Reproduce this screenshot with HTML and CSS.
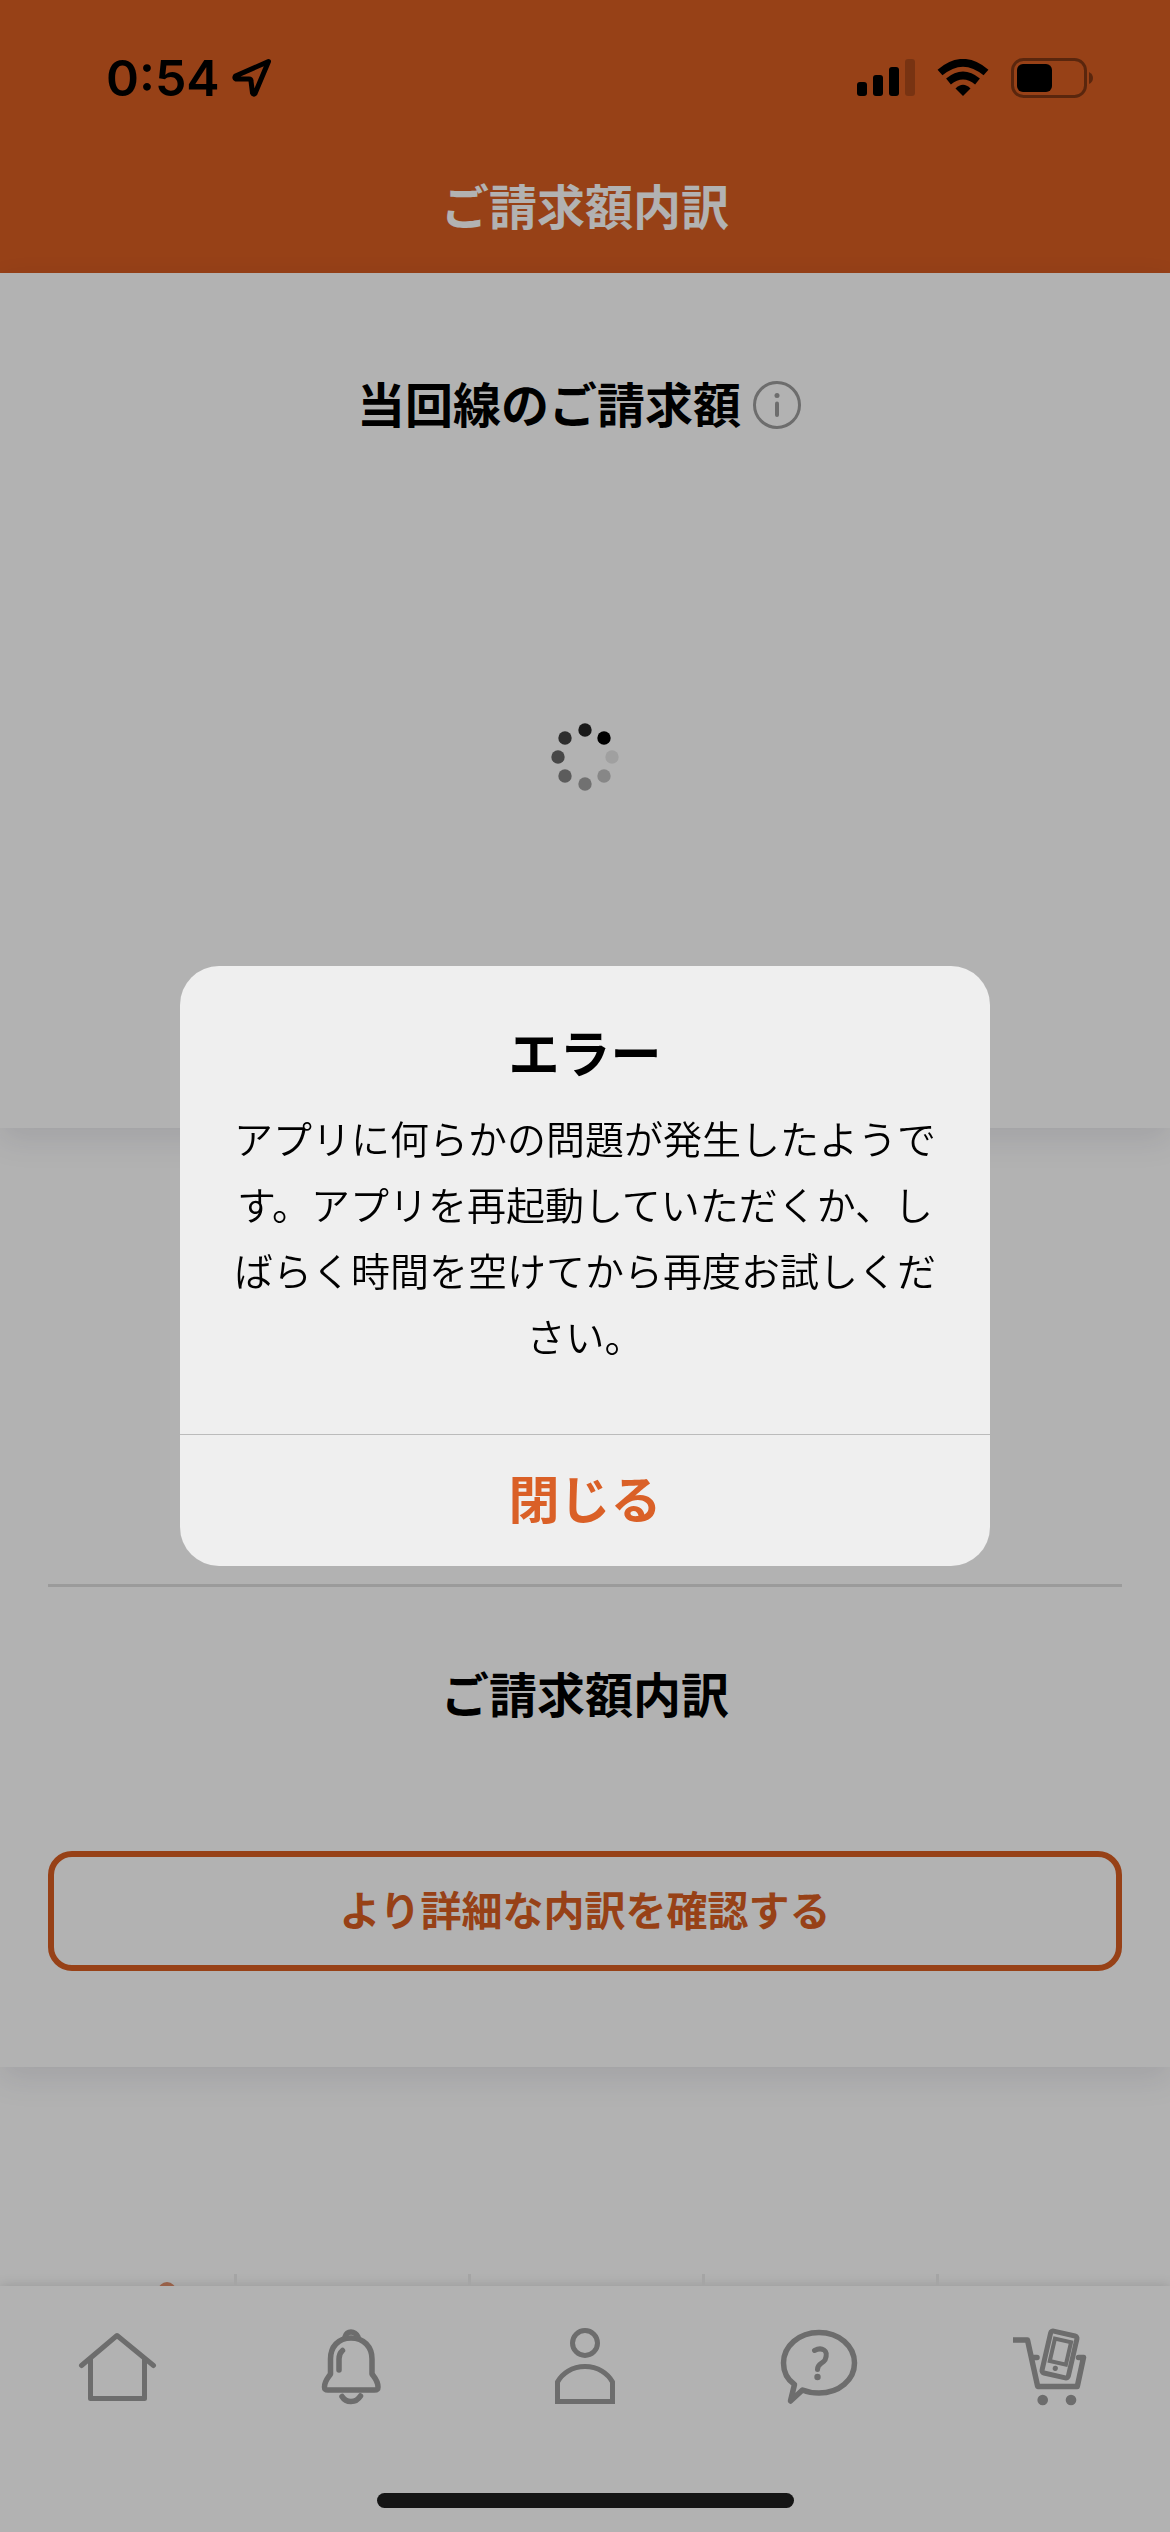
FILE: index.html
```html
<!DOCTYPE html>
<html lang="ja">
<head>
<meta charset="utf-8">
<meta name="viewport" content="width=device-width, initial-scale=1">
<title>ご請求額内訳</title>
<link rel="stylesheet" href="styles.css">
</head>
<body>
<div class="app">
  <header class="header">
    <div class="status">
      <div class="status-left">
        <span class="time">0:54</span>
        <svg width="40" height="40" viewBox="0 0 40 40" fill="none" stroke="#000" stroke-width="5" stroke-linejoin="round" aria-hidden="true"><path d="M36.500 3.500L3.500 18Q2 20 4 21H17Q19 21 19 23L20.500 35Q21.500 37 23 35.500Z"/></svg>
      </div>
      <div class="status-right">
        <svg width="58" height="38" viewBox="0 0 58 38" aria-hidden="true"><rect y="23" width="10" height="14" rx="3"/><rect x="16" y="16" width="10" height="21" rx="3"/><rect x="32" y="8" width="10" height="29" rx="3"/><rect x="48" width="10" height="37" rx="3" opacity=".2"/></svg>
        <svg width="52" height="38" viewBox="0 0 52 38" aria-hidden="true"><path d="M26 37L18.500 29.500Q26 22 33.500 29.500Z"/><g fill="none" stroke="#000" stroke-width="7.500"><path d="M11.500 22.500Q26 10.500 40.500 22.500"/><path d="M3 13.500Q26 -6 49 13.500"/></g></svg>
        <svg width="84" height="40" viewBox="0 0 84 40" aria-hidden="true"><rect x="1.500" y="1.500" width="73" height="37" rx="11" fill="none" stroke="#000" stroke-width="3" opacity=".4"/><rect x="6" y="6" width="35" height="28" rx="6"/><path d="M78 14Q82 16 82 20T78 26Z" opacity=".4"/></svg>
      </div>
    </div>
    <h1 class="page-title">ご請求額内訳</h1>
  </header>

  <main class="main">
    <section class="card card-amount">
      <div class="amount-head">
        <h2 class="heading">当回線のご請求額</h2>
        <button class="info" type="button" aria-label="説明">
          <svg width="48" height="48" viewBox="0 0 48 48" fill="none" stroke="#9c9c9c" stroke-linecap="round"><circle cx="24" cy="24" r="22.500" stroke-width="3"/><path d="M24 22.500V34" stroke-width="4"/><circle cx="24" cy="14.500" r="2.500" fill="#9c9c9c" stroke="none"/></svg>
        </button>
      </div>
      <svg class="spinner" width="68" height="68" viewBox="0 0 68 68" role="img" aria-label="読み込み中">
        <circle cx="53" cy="15" r="6.700"/>
        <circle cx="34" cy="7" r="6.700" opacity=".85"/>
        <circle cx="14" cy="15" r="6.700" opacity=".74"/>
        <circle cx="7" cy="34" r="6.700" opacity=".6"/>
        <circle cx="14" cy="53" r="6.700" opacity=".48"/>
        <circle cx="34" cy="61" r="6.700" opacity=".36"/>
        <circle cx="53" cy="53" r="6.700" opacity=".24"/>
        <circle cx="61" cy="34" r="6.700" opacity=".1"/>
      </svg>
    </section>

    <section class="card card-detail">
      <hr class="rule">
      <h2 class="heading">ご請求額内訳</h2>
      <button class="detail-button" type="button">より詳細な内訳を確認する</button>
    </section>

    <div class="tiles" aria-hidden="true">
      <div class="tile"><span class="tile-badge"></span></div>
      <div class="tile"></div>
      <div class="tile"></div>
      <div class="tile"></div>
      <div class="tile"></div>
    </div>
  </main>

  <nav class="tabs">
    <a class="tab" href="#home" aria-label="ホーム">
      <svg class="tab-icon" viewBox="0 0 80 80" stroke-width="5"><path d="M4.500 38.500L40 8.500L76.500 38.500M13.500 31.500V71.500H67.500V31.500"/></svg>
    </a>
    <a class="tab" href="#news" aria-label="お知らせ">
      <svg class="tab-icon" viewBox="0 0 80 80" stroke-width="5.500"><path d="M40 11C27 11 19.500 20 19.500 32V47C17 51 13.500 54 13.500 60Q13.500 63 17 63H63.500Q67 63 67 60C67 54 64 51 61 47V32C61 20 53 11 40 11Z"/><path d="M34 10Q35.500 5 40 5T47 10"/><path d="M31.500 23.500Q28 26.500 28 32V43"/><path d="M31 69.500Q34 74.500 40 74.500T49.500 69"/></svg>
    </a>
    <a class="tab" href="#account" aria-label="マイページ">
      <svg class="tab-icon tab-icon-sharp" viewBox="0 0 80 80" stroke-width="5"><circle cx="40" cy="16" r="12.500"/><path d="M12.500 74.500V55C17 46.500 27 39.500 40 39.500S63 46.500 67.500 55V74.500Z"/></svg>
    </a>
    <a class="tab" href="#support" aria-label="サポート">
      <svg class="tab-icon" viewBox="0 0 80 80" stroke-width="5.500"><path d="M15.500 57.500C9 53 4.500 45 4.500 36C4.500 19 20 5.500 40 5.500S75.500 19 75.500 36S60 66 40 66Q31 66 23.500 63L11.500 74Z"/><path d="M35.500 23.500Q41 20.500 45 23T46 33C43.500 37 38.500 36 38.500 42.500" stroke-width="5"/><circle cx="38.500" cy="50" r="3.200" fill="#9c9c9c" stroke="none"/></svg>
    </a>
    <a class="tab" href="#shop" aria-label="ショップ">
      <svg class="tab-icon" viewBox="0 0 80 80" stroke-width="5.500"><path d="M1 13H14.500L24.700 59.500H64.300L70.500 30.500H65.500M20 30.500H24"/><g transform="rotate(13 46.500 27.500)"><rect x="33" y="6" width="27" height="43" rx="2.500" stroke-width="5"/><rect x="38.500" y="13" width="16.500" height="23" stroke-width="4" class="tab-icon-sharp"/><circle cx="45.500" cy="42" r="2.600" fill="#9c9c9c" stroke="none"/></g><g fill="#9c9c9c" stroke="none"><circle cx="29.700" cy="73" r="5.300"/><circle cx="58" cy="73" r="5.300"/></g></svg>
    </a>
  </nav>
</div>

<div class="overlay">
  <div class="dialog" role="alertdialog" aria-modal="true" aria-labelledby="dialog-title" aria-describedby="dialog-text">
    <div class="dialog-body">
      <h2 class="dialog-title" id="dialog-title">エラー</h2>
      <p class="dialog-text" id="dialog-text">アプリに何らかの問題が発生したようです。アプリを再起動していただくか、しばらく時間を空けてから再度お試しください。</p>
    </div>
    <button class="dialog-close" type="button">閉じる</button>
  </div>
</div>
<div class="home-indicator"></div>
</body>
</html>
```
FILE: styles.css
```css
* {
  box-sizing: border-box;
}

body,
h1,
h2,
p {
  margin: 0;
}

body {
  background: #fff;
  color: #000;
  font-family: "Noto Sans CJK JP", sans-serif;
}

button {
  padding: 0;
  border: 0;
  background: none;
  font-family: inherit;
}

svg {
  display: block;
  flex: none;
}

.app {
  display: flex;
  flex-direction: column;
  min-height: 100vh;
}

/* Header */
.header {
  padding-bottom: 21px;
  background: #d85d22;
}

.status {
  display: flex;
  align-items: center;
  justify-content: space-between;
  height: 156px;
  padding: 0 75px 0 106px;
}

.status-left {
  display: flex;
  align-items: center;
  gap: 12px;
}

.status-right {
  display: flex;
  align-items: center;
  gap: 22px;
}

.time {
  font: 600 50px/60px Inter, sans-serif;
}

.page-title {
  color: #fff;
  font-size: 48px;
  font-weight: 700;
  line-height: 96px;
  text-align: center;
}

/* Content */
.main {
  display: flex;
  flex: 1;
  flex-direction: column;
}

.card {
  position: relative;
  background: #fff;
  box-shadow: 0 12px 30px rgba(30, 30, 70, 0.1);
}

.card-amount {
  z-index: 1;
  padding: 96px 48px 337px;
}

.amount-head {
  display: flex;
  align-items: center;
  justify-content: center;
  gap: 12px;
  padding-right: 12px;
}

.heading {
  padding-bottom: 6px;
  font-size: 48px;
  font-weight: 700;
  line-height: 66px;
  text-align: center;
}

.spinner {
  margin: 282px auto 0;
}

.card-detail {
  padding: 456px 48px 96px;
}

.rule {
  height: 3px;
  margin: 0 0 72px;
  border: 0;
  background: #dfdfdf;
}

.detail-button {
  display: block;
  width: 100%;
  height: 120px;
  margin-top: 120px;
  padding-bottom: 6px;
  border: 6px solid #d85d22;
  border-radius: 24px;
  color: #d85d22;
  font-size: 41px;
  font-weight: 700;
}

.tiles {
  display: grid;
  grid-template-columns: repeat(5, 1fr);
  height: 12px;
  margin-top: auto;
}

.tile {
  position: relative;
  overflow: hidden;
}

.tile + .tile {
  border-left: 3px solid #ececec;
}

.tile-badge {
  position: absolute;
  top: 8px;
  left: 158px;
  width: 18px;
  height: 18px;
  border-radius: 50%;
  background: #d88a68;
}

/* Tab bar */
.tabs {
  display: grid;
  grid-template-columns: repeat(5, 1fr);
  min-height: 246px;
  padding-top: 41px;
  background: #fff;
  box-shadow: 0 0 12px rgba(0, 0, 0, 0.16);
}

.tab {
  display: flex;
  justify-content: center;
}

.tab-icon {
  width: 80px;
  height: 80px;
  fill: none;
  stroke: #9c9c9c;
  stroke-linecap: round;
  stroke-linejoin: round;
}

.tab-icon-sharp {
  stroke-linejoin: miter;
}

/* Error dialog */
.overlay {
  position: fixed;
  inset: 0;
  z-index: 10;
  display: flex;
  align-items: center;
  justify-content: center;
  background: rgba(0, 0, 0, 0.3);
}

.dialog {
  width: 810px;
  max-width: 90%;
  overflow: hidden;
  border-radius: 39px;
  background: #efefef;
}

.dialog-body {
  padding: 46px 54px 66px;
}

.dialog-title {
  margin-bottom: 14px;
  font-size: 51px;
  font-weight: 700;
  line-height: 78px;
  text-align: center;
}

.dialog-text {
  font-size: 39px;
  font-weight: 350;
  line-height: 66px;
  text-align: center;
}

.dialog-close {
  display: block;
  width: 100%;
  height: 132px;
  padding-bottom: 8px;
  border-top: 1px solid #bbb;
  color: #da6027;
  font-size: 51px;
  font-weight: 700;
}

.home-indicator {
  position: fixed;
  bottom: 24px;
  left: 50%;
  z-index: 20;
  width: 417px;
  height: 15px;
  margin-left: -208px;
  border-radius: 8px;
  background: #151515;
}
```
